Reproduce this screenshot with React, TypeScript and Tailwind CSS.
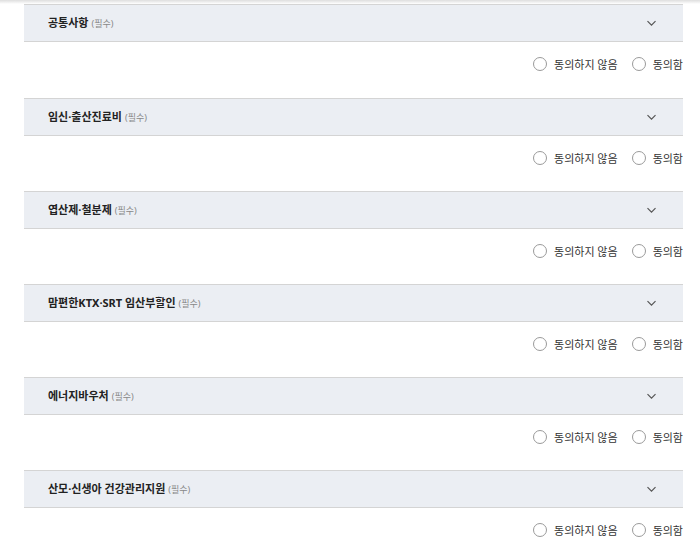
const sections = [
  "공통사항",
  "임신·출산진료비",
  "엽산제·철분제",
  "맘편한KTX·SRT 임산부할인",
  "에너지바우처",
  "산모·신생아 건강관리지원",
];

function Chevron() {
  return (
    <svg width="11" height="7" viewBox="0 0 11 7" fill="none">
      <path d="M1.5 1.2l4 4 4-4" stroke="#555" strokeWidth="1.2" />
    </svg>
  );
}

function Radio({ label }: { label: string }) {
  return (
    <label className="flex items-center gap-[7px]">
      <span className="w-[14px] h-[14px] rounded-full border border-[#9a9a9a] bg-white" />
      <span className="text-[11px] text-[#333] leading-none">{label}</span>
    </label>
  );
}

export default function App() {
  return (
    <div
      className="w-[700px] h-[560px] bg-white overflow-hidden"
      style={{ fontFamily: '"Noto Sans", "Noto Sans CJK KR", sans-serif' }}
    >
      <div className="h-[4px] bg-gradient-to-b from-[#dedede] to-white" />
      <div className="pl-[24px] pr-[17px]">
        {sections.map((title, i) => (
          <section key={title}>
            <div className="h-[38px] flex items-center justify-between bg-[#ebeef3] border-y border-[#d4d4d4] pl-[24px] pr-[26px]">
              <div className="flex items-baseline gap-[3px]">
                <span className="text-[11px] font-bold text-[#222]">{title}</span>
                <span className="text-[9px] text-[#888]">(필수)</span>
              </div>
              <Chevron />
            </div>
            <div
              className={
                i === 0
                  ? "h-[56px] flex justify-end items-start pt-[15px] gap-[14px] overflow-hidden"
                  : "h-[55px] flex justify-end items-start pt-[15px] gap-[14px] overflow-hidden"
              }
            >
              <Radio label="동의하지 않음" />
              <Radio label="동의함" />
            </div>
          </section>
        ))}
      </div>
    </div>
  );
}
